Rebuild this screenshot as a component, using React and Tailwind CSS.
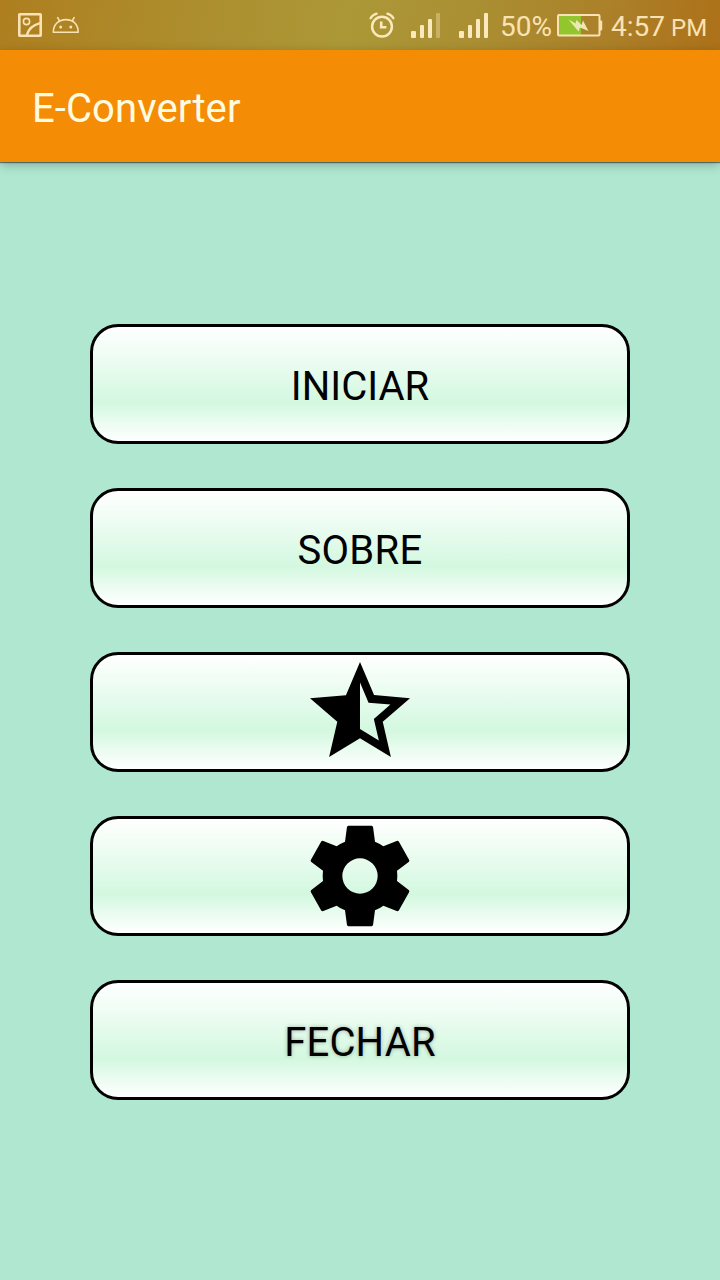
import clsx from 'clsx';

function PictureIcon() {
    return (
        <svg className="h-[24px] w-[24px]" viewBox="0 0 24 24" fill="none" stroke="#f9e3b4">
            <rect x="1.3" y="1.3" width="21.4" height="21.4" rx="0.5" strokeWidth="2.6" />
            <circle cx="8.5" cy="8.5" r="3.1" strokeWidth="1.6" />
            <path d="M8.8 22C10.5 16 14.5 12.2 22 10.2" strokeWidth="2.4" />
        </svg>
    );
}

function AndroidIcon() {
    return (
        <svg className="h-[18px] w-[28px]" viewBox="0 0 28 18" fill="none" stroke="#f9e3b4" strokeWidth="1.6">
            <path d="M1.3 16.2C1.3 8.5 6.6 3.6 14 3.6S26.2 8.5 26.2 16.2Z" strokeLinejoin="round" />
            <path d="M7.6 5.2 5.4 1M20.2 5.2 22.4 1" />
            <circle cx="8.7" cy="11" r="1.5" fill="#f9e3b4" stroke="none" />
            <circle cx="18.8" cy="11" r="1.5" fill="#f9e3b4" stroke="none" />
        </svg>
    );
}

function AlarmIcon() {
    return (
        <svg className="h-[26px] w-[26px]" viewBox="0 0 26 26" fill="none" stroke="#f9e9bd">
            <circle cx="13" cy="14.6" r="9.9" strokeWidth="2.5" />
            <path d="M12.2 9.4V15.2H17.4" strokeWidth="2.6" />
            <path d="M1.6 6.3Q3.6 2.8 7.6 1.7M24.4 6.3Q22.4 2.8 18.4 1.7" strokeWidth="2.3" strokeLinecap="round" />
        </svg>
    );
}

function Signal({ full = false }) {
    return (
        <div className="flex h-[25px] items-end gap-[4px]">
            <div className="h-[7px] w-[5px] rounded-[1px] bg-[#f9e9bd]" />
            <div className="h-[13px] w-[4px] rounded-[1px] bg-[#f9e9bd]" />
            <div className="h-[19px] w-[4px] rounded-[1px] bg-[#f9e9bd]" />
            <div className={clsx('h-[25px] w-[4px] rounded-[1px]', full ? 'bg-[#f9e9bd]' : 'bg-[#c9b064]')} />
        </div>
    );
}

function BatteryIcon() {
    return (
        <svg className="h-[23px] w-[46px]" viewBox="0 0 46 23">
            <rect x="2" y="2" width="22" height="19" fill="#93c52f" />
            <rect x="1" y="1" width="41.5" height="20.5" rx="1" fill="none" stroke="#f9e3b4" strokeWidth="2" />
            <path d="M43 6.5h1.2a1 1 0 0 1 1 1v8a1 1 0 0 1-1 1H43z" fill="#f9e3b4" />
            <path d="M11.5 5.5 18.5 9.5 19.5 6 24.5 11 26 6.5 31.5 17 23 13.5 21.5 17.5Z" fill="#eee8b4" />
        </svg>
    );
}

function StarHalfIcon() {
    return (
        <svg className="h-[120px] w-[120px] shrink-0" viewBox="0 0 24 24">
            <path d="M22 9.24l-7.19-.62L12 2 9.19 8.63 2 9.24l5.46 4.73L5.82 21 12 17.27 18.18 21l-1.63-7.03L22 9.24zM12 15.4V6.1l1.71 4.04 4.38.38-3.32 2.88 1 4.28L12 15.4z" />
        </svg>
    );
}

function GearIcon() {
    return (
        <svg className="h-[120px] w-[120px] shrink-0" viewBox="30 18 360 360">
            <path
                fillRule="evenodd"
                d="M175 47H245L249 50 255 95Q268 100 280 109L322 92 326 94 358 151 357 155 321 182Q323 198 321 213L357 241 358 245 326 302 322 304 280 287Q268 296 255 301L249 346 245 349H175L171 346 165 301Q152 296 140 287L98 304 94 302 62 245 63 241 99 213Q97 198 99 182L63 155 62 151 94 94 98 92 140 109Q152 100 165 95L171 50ZM210 145A53 53 0 1 0 210 251A53 53 0 1 0 210 145Z"
            />
        </svg>
    );
}

function MenuButton({ children, className }) {
    return (
        <button
            className={clsx(
                'flex h-[120px] w-[540px] items-center justify-center rounded-[28px] border-[3px] border-black bg-linear-to-b from-white via-[#d3f8e0] via-66% to-white text-[40px] leading-none text-black',
                className
            )}
        >
            {children}
        </button>
    );
}

function StatusBar() {
    return (
        <div className="flex h-[50px] items-center bg-[linear-gradient(100deg,#ae7e1f_0%,#ad8b2b_22%,#ac9837_48%,#aa8f33_65%,#ab8029_84%,#ad7119_100%)] text-[28px] leading-none text-[#f9e3b4]">
            <div className="ml-[18px]"><PictureIcon /></div>
            <div className="ml-[10px]"><AndroidIcon /></div>
            <div className="ml-[289px]"><AlarmIcon /></div>
            <div className="ml-[16px]"><Signal /></div>
            <div className="ml-[19px]"><Signal full /></div>
            <span className="ml-[12px] w-[57px] pt-[3px]">50%</span>
            <BatteryIcon />
            <div className="ml-[8px] flex items-baseline gap-[6px] pt-[3px]">
                <span>4:57</span>
                <span className="text-[24px]">PM</span>
            </div>
        </div>
    );
}

export default function App() {
    return (
        <div className="flex h-[1280px] w-[720px] flex-col overflow-hidden bg-[#b0e7d1] font-['Roboto',sans-serif]">
            <StatusBar />

            {/* App bar */}
            <header className="flex h-[112px] items-center bg-[#f58c05] pt-[6px] pl-[32px] shadow-[0_1px_1px_rgba(0,0,0,0.45),0_3px_10px_rgba(0,0,0,0.25)]">
                <h1 className="text-[40px] leading-none tracking-[0.1px] text-[#fffbe0]">E-Converter</h1>
            </header>

            {/* Main menu */}
            <main className="flex flex-col items-center gap-[44px] pt-[162px]">
                <MenuButton className="pt-[6px]">INICIAR</MenuButton>
                <MenuButton className="pt-[6px] tracking-[0.3px]">SOBRE</MenuButton>
                <MenuButton><StarHalfIcon /></MenuButton>
                <MenuButton><GearIcon /></MenuButton>
                <MenuButton className="pt-[6px] tracking-[0.2px] text-shadow-[0_0_4px_rgba(0,0,0,0.3)]">FECHAR</MenuButton>
            </main>
        </div>
    );
}
